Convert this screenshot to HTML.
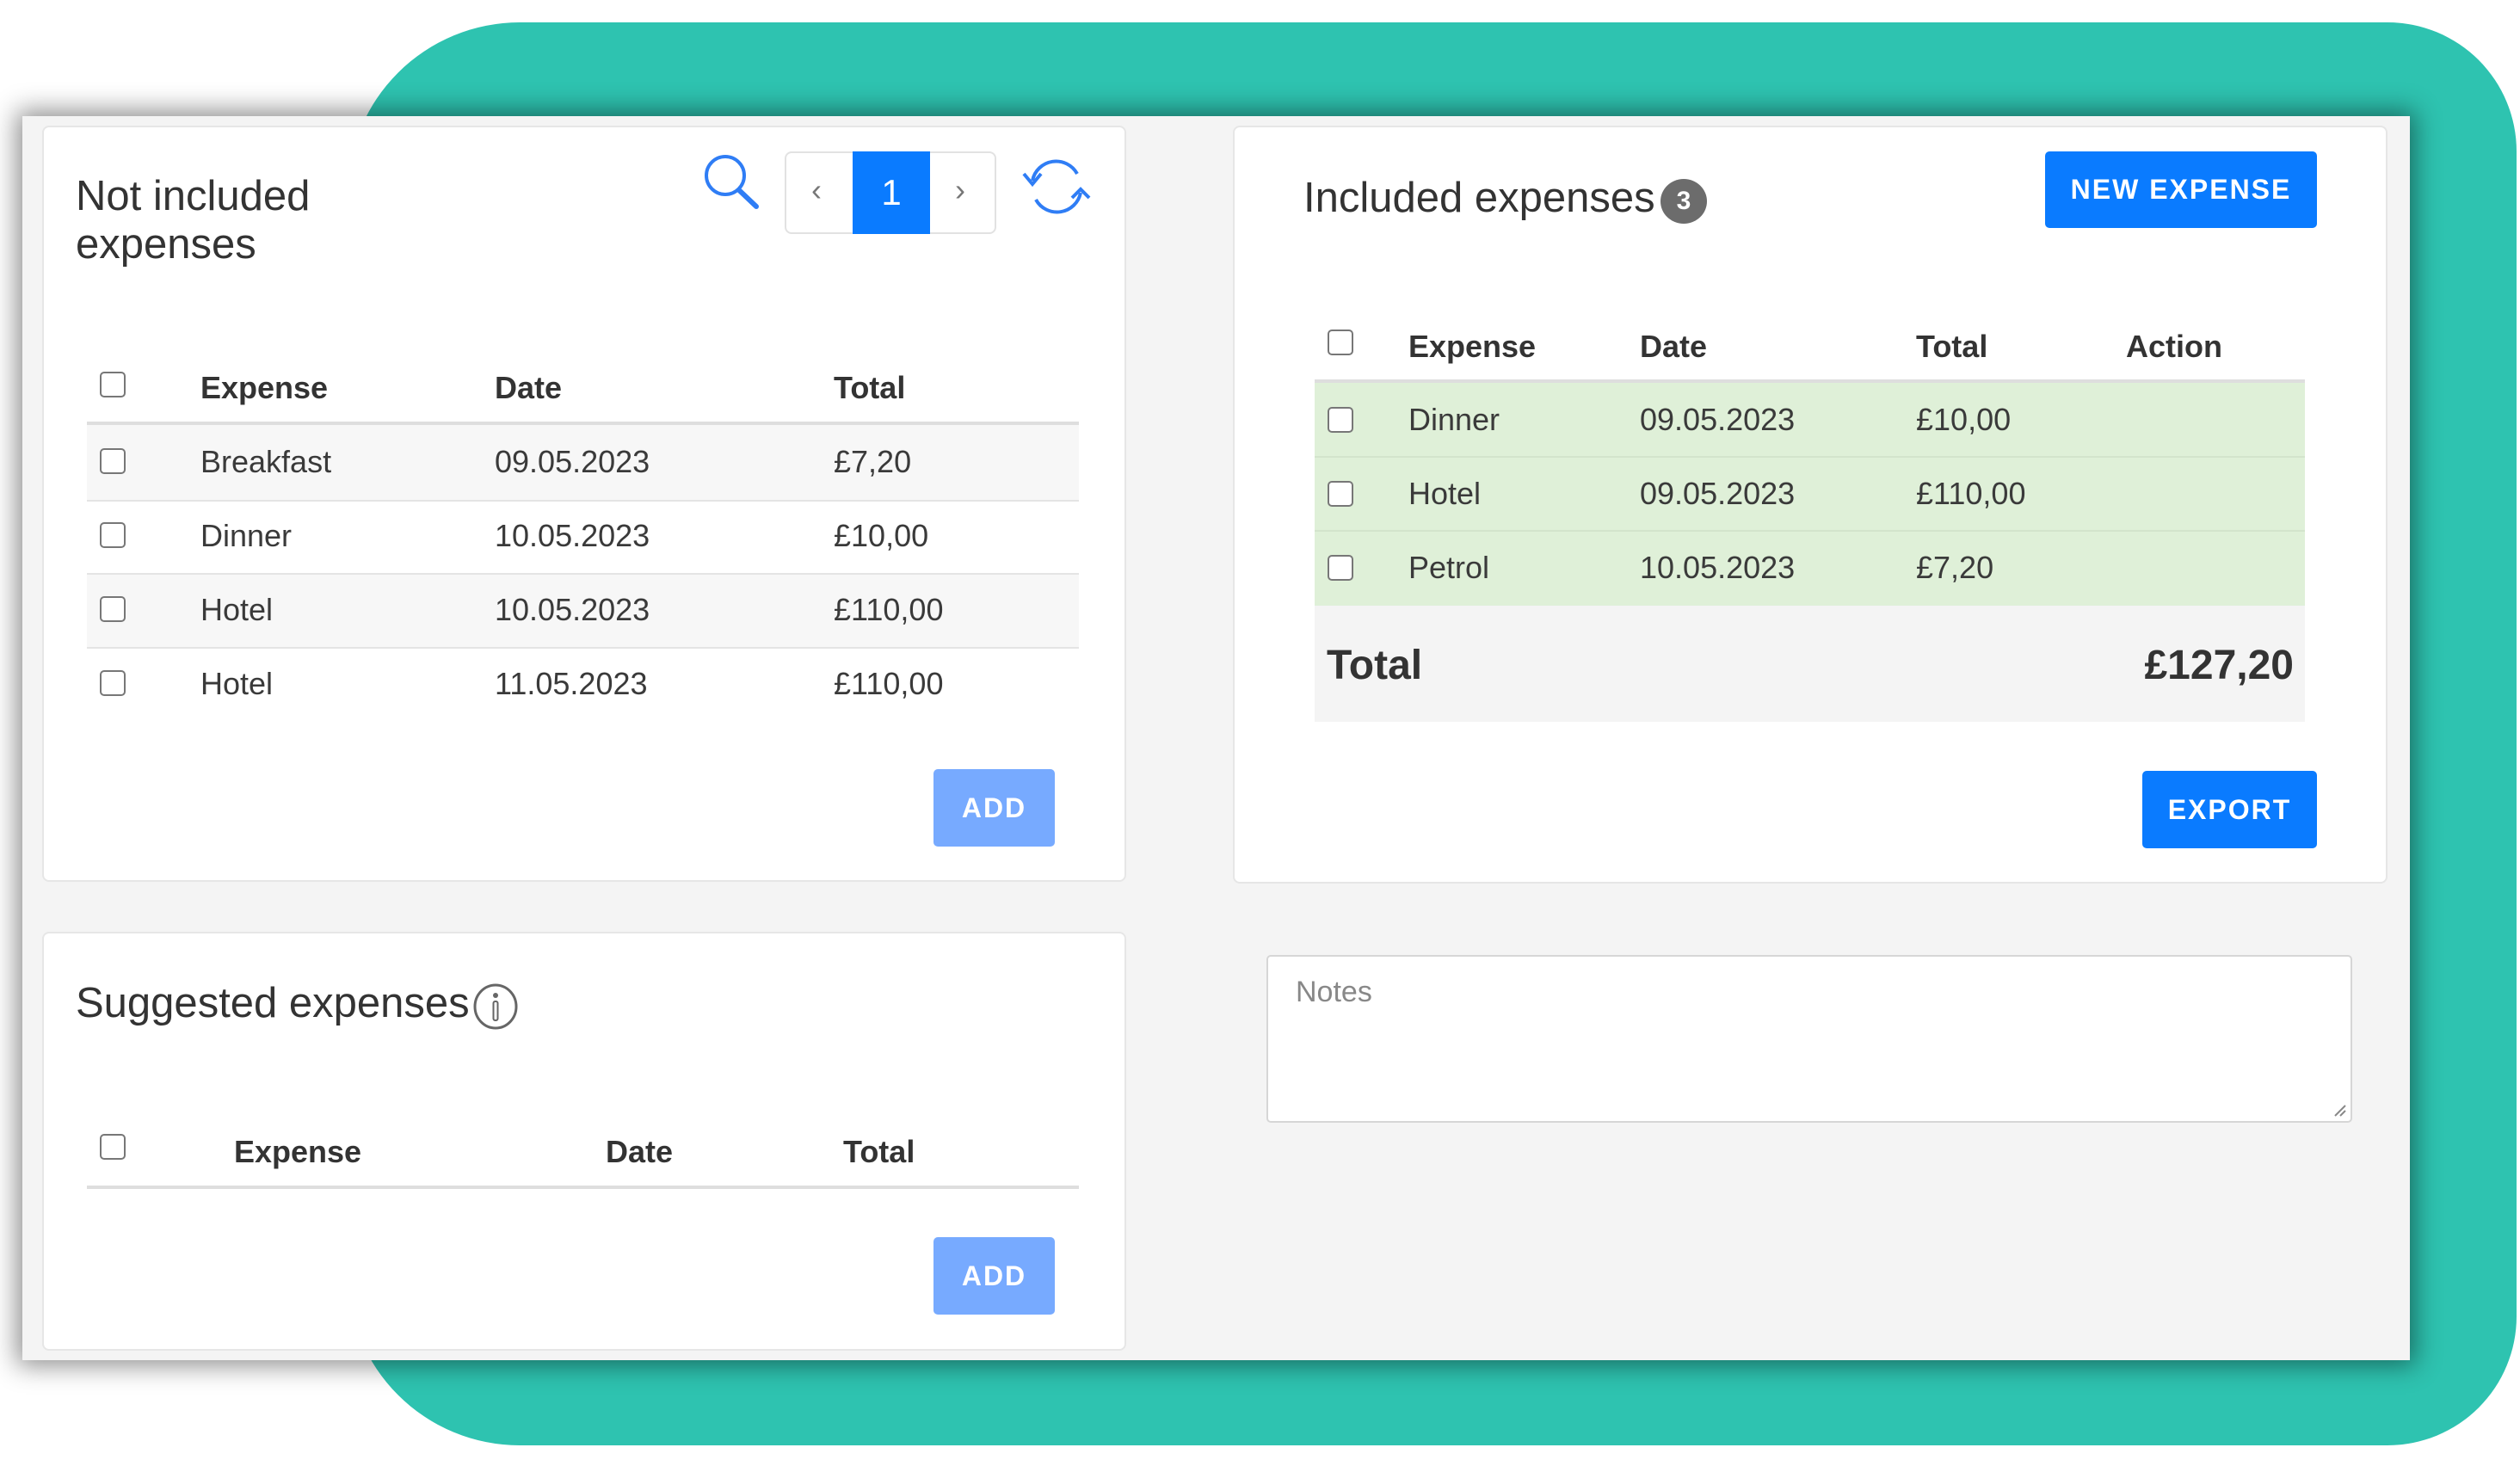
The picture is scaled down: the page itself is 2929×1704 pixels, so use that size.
<!DOCTYPE html>
<html><head><meta charset="utf-8"><style>
*{box-sizing:border-box;margin:0;padding:0}
body{width:2929px;height:1704px;background:#fff;position:relative;overflow:hidden;font-family:"Liberation Sans",sans-serif;color:#333}
.a{position:absolute}
.teal{left:404px;top:26px;width:2521px;height:1654px;background:#2ec3b0;border-radius:200px 150px 150px 200px}
.shot{left:26px;top:135px;width:2775px;height:1446px;background:#f4f4f4;box-shadow:0 0 28px 6px rgba(0,0,0,.45)}
.card{background:#fff;border:2px solid #e6e6e6;border-radius:8px}
.t{font-size:49px;color:#333;line-height:56px}
.h{font-size:36px;font-weight:bold;color:#333}
.b{font-size:36px;color:#3a3a3a}
.cb{width:30px;height:30px;border:2.5px solid #777;border-radius:5px;background:#fff}
.btn{color:#fff;font-weight:bold;font-size:32px;letter-spacing:2px;display:flex;align-items:center;justify-content:center;border-radius:5px}
.line{height:4px;background:#dedede}
.sep{height:2px;background:#e4e4e4}
</style></head><body>
<div class="a teal"></div>
<div class="a shot"></div>

<!-- Card 1 -->
<div class="a card" style="left:49px;top:146px;width:1260px;height:879px"></div>
<div class="a t" style="left:88px;top:200px">Not included<br>expenses</div>
<svg class="a" style="left:815px;top:176px" width="72" height="70" viewBox="0 0 72 70"><circle cx="28" cy="28" r="22" fill="none" stroke="#2f7df5" stroke-width="4"/><line x1="44" y1="45" x2="64" y2="64" stroke="#2f7df5" stroke-width="6" stroke-linecap="round"/></svg>
<div class="a" style="left:912px;top:176px;width:246px;height:96px;border:2px solid #e2e2e2;border-radius:8px;background:#fff"></div>
<div class="a" style="left:991px;top:176px;width:90px;height:96px;background:#0a7bff;color:#fff;font-size:42px;display:flex;align-items:center;justify-content:center">1</div>
<div class="a" style="left:943px;top:200px;font-size:36px;color:#777">‹</div>
<div class="a" style="left:1110px;top:200px;font-size:36px;color:#777">›</div>
<svg class="a" style="left:1186px;top:180px" width="84" height="74" viewBox="0 0 84 74"><path d="M14 30 A28 28 0 0 1 66 22" fill="none" stroke="#2f7df5" stroke-width="4"/><path d="M70 44 A28 28 0 0 1 18 52" fill="none" stroke="#2f7df5" stroke-width="4"/><path d="M4 22 L14 34 L24 22" fill="none" stroke="#2f7df5" stroke-width="4"/><path d="M60 50 L70 40 L80 50" fill="none" stroke="#2f7df5" stroke-width="4"/></svg>

<div class="a cb" style="left:116px;top:432px"></div>
<div class="a h" style="left:233px;top:430px">Expense</div>
<div class="a h" style="left:575px;top:430px">Date</div>
<div class="a h" style="left:969px;top:430px">Total</div>
<div class="a line" style="left:101px;top:490px;width:1153px"></div>
<div class="a" style="left:101px;top:494px;width:1153px;height:88px;background:#f7f7f7"></div>
<div class="a sep" style="left:101px;top:581px;width:1153px"></div>
<div class="a" style="left:101px;top:668px;width:1153px;height:85px;background:#f7f7f7"></div>
<div class="a sep" style="left:101px;top:666px;width:1153px"></div>
<div class="a sep" style="left:101px;top:752px;width:1153px"></div>
<div class="a cb" style="left:116px;top:521px"></div><div class="a b" style="left:233px;top:516px">Breakfast</div><div class="a b" style="left:575px;top:516px">09.05.2023</div><div class="a b" style="left:969px;top:516px">£7,20</div>
<div class="a cb" style="left:116px;top:607px"></div><div class="a b" style="left:233px;top:602px">Dinner</div><div class="a b" style="left:575px;top:602px">10.05.2023</div><div class="a b" style="left:969px;top:602px">£10,00</div>
<div class="a cb" style="left:116px;top:693px"></div><div class="a b" style="left:233px;top:688px">Hotel</div><div class="a b" style="left:575px;top:688px">10.05.2023</div><div class="a b" style="left:969px;top:688px">£110,00</div>
<div class="a cb" style="left:116px;top:779px"></div><div class="a b" style="left:233px;top:774px">Hotel</div><div class="a b" style="left:575px;top:774px">11.05.2023</div><div class="a b" style="left:969px;top:774px">£110,00</div>
<div class="a btn" style="left:1085px;top:894px;width:141px;height:90px;background:#77aaff">ADD</div>

<!-- Card 2 -->
<div class="a card" style="left:49px;top:1083px;width:1260px;height:487px"></div>
<div class="a t" style="left:88px;top:1138px">Suggested expenses</div>
<svg class="a" style="left:548px;top:1142px" width="56" height="56" viewBox="0 0 56 56"><ellipse cx="28" cy="28" rx="24" ry="25" fill="none" stroke="#666" stroke-width="3"/><circle cx="28" cy="15" r="3" fill="#666"/><rect x="25.5" y="22" width="5" height="22" rx="2" fill="none" stroke="#666" stroke-width="2"/></svg>
<div class="a cb" style="left:116px;top:1318px"></div>
<div class="a h" style="left:272px;top:1318px">Expense</div>
<div class="a h" style="left:704px;top:1318px">Date</div>
<div class="a h" style="left:980px;top:1318px">Total</div>
<div class="a line" style="left:101px;top:1378px;width:1153px"></div>
<div class="a btn" style="left:1085px;top:1438px;width:141px;height:90px;background:#77aaff">ADD</div>

<!-- Card 3 -->
<div class="a card" style="left:1433px;top:146px;width:1342px;height:881px"></div>
<div class="a t" style="left:1515px;top:202px">Included expenses</div>
<div class="a" style="left:1930px;top:208px;width:54px;height:52px;border-radius:50%;background:#6c6c6c;color:#fff;font-size:30px;font-weight:bold;display:flex;align-items:center;justify-content:center">3</div>
<div class="a btn" style="left:2377px;top:176px;width:316px;height:89px;background:#0a7bff">NEW EXPENSE</div>
<div class="a cb" style="left:1543px;top:383px"></div>
<div class="a h" style="left:1637px;top:382px">Expense</div>
<div class="a h" style="left:1906px;top:382px">Date</div>
<div class="a h" style="left:2227px;top:382px">Total</div>
<div class="a h" style="left:2471px;top:382px">Action</div>
<div class="a" style="left:1528px;top:444px;width:1151px;height:260px;background:#dff0d8"></div>
<div class="a line" style="left:1528px;top:441px;width:1151px"></div>
<div class="a sep" style="left:1528px;top:530px;width:1151px;background:#d3e4cc"></div>
<div class="a sep" style="left:1528px;top:616px;width:1151px;background:#d3e4cc"></div>
<div class="a cb" style="left:1543px;top:473px"></div><div class="a b" style="left:1637px;top:467px">Dinner</div><div class="a b" style="left:1906px;top:467px">09.05.2023</div><div class="a b" style="left:2227px;top:467px">£10,00</div>
<div class="a cb" style="left:1543px;top:559px"></div><div class="a b" style="left:1637px;top:553px">Hotel</div><div class="a b" style="left:1906px;top:553px">09.05.2023</div><div class="a b" style="left:2227px;top:553px">£110,00</div>
<div class="a cb" style="left:1543px;top:645px"></div><div class="a b" style="left:1637px;top:639px">Petrol</div><div class="a b" style="left:1906px;top:639px">10.05.2023</div><div class="a b" style="left:2227px;top:639px">£7,20</div>
<div class="a" style="left:1528px;top:704px;width:1151px;height:135px;background:#f4f4f4"></div>
<div class="a" style="left:1542px;top:746px;font-size:48px;font-weight:bold;color:#333">Total</div>
<div class="a" style="left:2400px;top:746px;width:266px;text-align:right;font-size:48px;font-weight:bold;color:#333">£127,20</div>
<div class="a btn" style="left:2490px;top:896px;width:203px;height:90px;background:#0a7bff">EXPORT</div>

<!-- Notes -->
<div class="a" style="left:1472px;top:1110px;width:1262px;height:195px;background:#fff;border:2px solid #d6d6d6;border-radius:5px"></div>
<div class="a" style="left:1506px;top:1134px;font-size:34px;color:#888">Notes</div>
<svg class="a" style="left:2712px;top:1283px" width="16" height="16"><path d="M2 14 L14 2 M8 14 L14 8" stroke="#888" stroke-width="2"/></svg>
</body></html>
